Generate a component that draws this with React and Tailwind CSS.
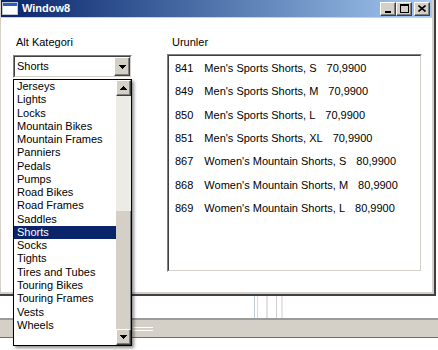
import React from "react";

const cats = ["Jerseys","Lights","Locks","Mountain Bikes","Mountain Frames","Panniers","Pedals","Pumps","Road Bikes","Road Frames","Saddles","Shorts","Socks","Tights","Tires and Tubes","Touring Bikes","Touring Frames","Vests","Wheels"];

const products = [
  ["841", "Men's Sports Shorts, S", "70,9900"],
  ["849", "Men's Sports Shorts, M", "70,9900"],
  ["850", "Men's Sports Shorts, L", "70,9900"],
  ["851", "Men's Sports Shorts, XL", "70,9900"],
  ["867", "Women's Mountain Shorts, S", "80,9900"],
  ["868", "Women's Mountain Shorts, M", "80,9900"],
  ["869", "Women's Mountain Shorts, L", "80,9900"],
];

const raised = "bg-[#d4d0c8] border border-t-white border-l-white border-r-[#404040] border-b-[#404040] shadow-[inset_-1px_-1px_0_#808080]";

function Tri({ up }) {
  return (
    <svg width="7" height="4" viewBox="0 0 7 4" shapeRendering="crispEdges">
      {up ? <polygon points="0,4 7,4 3.5,0" fill="#000" /> : <polygon points="0,0 7,0 3.5,4" fill="#000" />}
    </svg>
  );
}

function CapBtn({ children, className = "" }) {
  return (
    <div className={`w-[16px] h-[14px] flex items-center justify-center ${raised} ${className}`}>
      {children}
    </div>
  );
}

export default function App() {
  return (
    <div className="relative w-[438px] h-[350px] bg-white overflow-hidden text-[11px] text-black" style={{ fontFamily: '"Liberation Sans", Arial, sans-serif' }}>
      {/* Window */}
      <div className="w-[436px] h-[296px] flex flex-col border-r-2 border-b-2 border-[#404040]">
        <div className="flex-1 flex flex-col border-r-2 border-b-2 border-l border-[#d4d0c8]">
          {/* Title bar */}
          <div className="h-[17px] flex items-center bg-linear-to-r from-[#0a246a] to-[#a6caf0] border-b border-[#d4d0c8] box-content">
            <svg width="16" height="13" viewBox="0 0 16 13" className="ml-[1px]" shapeRendering="crispEdges">
              <rect x="0.5" y="0.5" width="15" height="12" fill="#fff" stroke="#c0c8d8" />
              <rect x="1" y="1" width="14" height="3" fill="#2a5cc8" />
            </svg>
            <span className="ml-[4px] font-bold text-white text-[11px] leading-none">Window8</span>
            <div className="ml-auto mr-[2px] flex items-center">
              <CapBtn>
                <svg width="8" height="8" viewBox="0 0 8 8" shapeRendering="crispEdges"><rect x="1" y="6" width="6" height="2" fill="#000" /></svg>
              </CapBtn>
              <CapBtn>
                <svg width="9" height="9" viewBox="0 0 9 9" shapeRendering="crispEdges">
                  <rect x="0.5" y="0.5" width="8" height="8" fill="none" stroke="#000" />
                  <rect x="0" y="1" width="9" height="1" fill="#000" />
                </svg>
              </CapBtn>
              <CapBtn className="ml-[2px]">
                <svg width="8" height="7" viewBox="0 0 8 7">
                  <path d="M0.5 0.5 L7.5 6.5 M7.5 0.5 L0.5 6.5" stroke="#000" strokeWidth="1.6" />
                </svg>
              </CapBtn>
            </div>
          </div>
          {/* Client */}
          <div className="flex-1 bg-white flex items-start pl-[12px] pt-[18px]">
            <div className="w-[119px] flex flex-col">
              <div className="h-[13px] leading-[13px] pl-[3px]">Alt Kategori</div>
              <div className="mt-[6px] h-[23px] border border-t-[#808080] border-l-[#808080] border-r-white border-b-white">
                <div className="h-full flex border border-t-[#404040] border-l-[#404040] border-r-[#d4d0c8] border-b-[#d4d0c8] bg-white">
                  <div className="flex-1 pl-[2px] leading-[19px]">Shorts</div>
                  <div className={`w-[16px] flex items-center justify-center ${raised}`}>
                    <Tri />
                  </div>
                </div>
              </div>
            </div>
            <div className="ml-[35px] w-[255px] flex flex-col">
              <div className="h-[13px] leading-[13px] pl-[5px]">Urunler</div>
              <div className="mt-[5px] h-[218px] border border-t-[#808080] border-l-[#808080] border-r-white border-b-white">
                <div className="h-full border border-t-[#404040] border-l-[#404040] border-r-[#d4d0c8] border-b-[#d4d0c8] pl-[6px] pt-[0.5px]">
                  {products.map(([id, name, price]) => (
                    <div key={id} className="h-[23.33px] flex items-center whitespace-nowrap">
                      <span className="mr-[11px]">{id}</span>
                      <span className="mr-[10px]">{name}</span>
                      <span>{price}</span>
                    </div>
                  ))}
                </div>
              </div>
            </div>
          </div>
        </div>
      </div>

      {/* Background area below the window */}
      <div className="h-[22px] flex">
        <div className="ml-[254px] w-px h-full bg-[#c4ccd6]" />
        <div className="ml-[2px] w-px h-full bg-[#d6dce4]" />
        <div className="ml-[8px] w-[2px] h-full bg-[#e2e2e2]" />
        <div className="ml-[8px] w-px h-full bg-[#d0d0d0]" />
        <div className="ml-[4px] w-[2px] h-full bg-[#e6e6e6]" />
      </div>
      <div className="h-[20px] bg-[#d4d0c8] border-t-2 border-t-[#9c9a96] border-b border-b-[#707070] flex items-center">
        <div className="ml-[133px] w-[20px] flex flex-col">
          <div className="h-px bg-white" />
          <div className="h-[2px] bg-[#d4d0c8]" />
          <div className="h-px bg-white" />
        </div>
      </div>

      {/* Dropdown popup */}
      <div className="absolute left-[13px] top-[79px] w-[119px] h-[267px] border border-black bg-white flex shadow-[2px_2px_3px_rgba(0,0,0,0.45)]">
        <div className="flex-1 flex flex-col overflow-hidden">
          {cats.map((c) => (
            <div
              key={c}
              className={`h-[13.28px] shrink-0 leading-[13px] pl-[3px] whitespace-nowrap ${c === "Shorts" ? "bg-[#0a246a] text-white" : ""}`}
            >
              {c}
            </div>
          ))}
        </div>
        <div className="w-[15px] flex flex-col">
          <div className={`h-[16px] flex items-center justify-center ${raised}`}>
            <Tri up />
          </div>
          <div className="h-[115px] bg-[#ecebe6]" />
          <div className="flex-1 bg-[#d4d0c8] border-r border-[#808080]" />
          <div className={`h-[16px] flex items-center justify-center ${raised}`}>
            <Tri />
          </div>
        </div>
      </div>
    </div>
  );
}
